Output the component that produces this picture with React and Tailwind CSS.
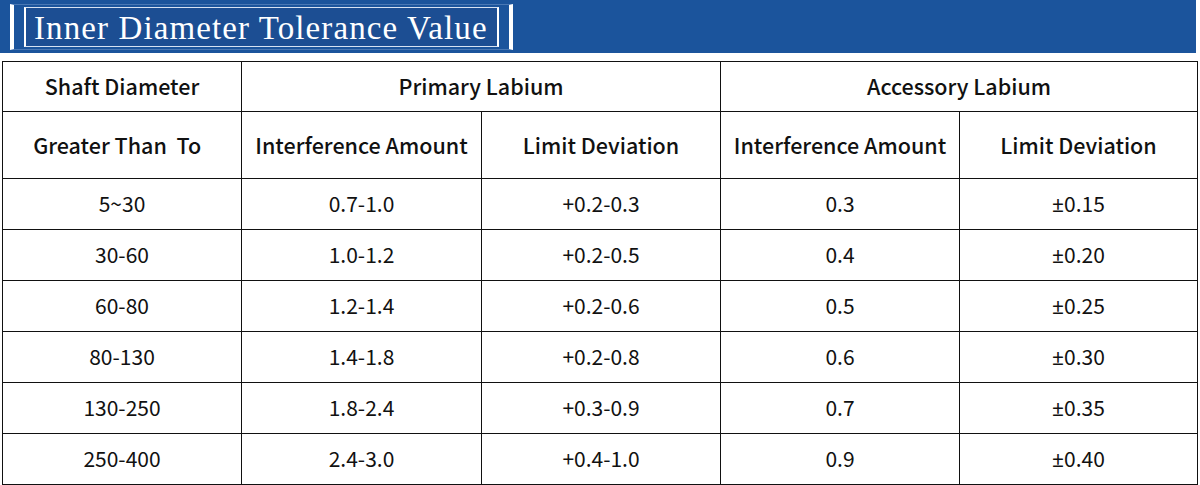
const rows = [
  ['5~30', '0.7-1.0', '+0.2-0.3', '0.3', '±0.15'],
  ['30-60', '1.0-1.2', '+0.2-0.5', '0.4', '±0.20'],
  ['60-80', '1.2-1.4', '+0.2-0.6', '0.5', '±0.25'],
  ['80-130', '1.4-1.8', '+0.2-0.8', '0.6', '±0.30'],
  ['130-250', '1.8-2.4', '+0.3-0.9', '0.7', '±0.35'],
  ['250-400', '2.4-3.0', '+0.4-1.0', '0.9', '±0.40'],
]

const cell = 'border-[1.5px] border-[#111] text-center align-middle'

// the CJK font draws ± full-width, so give it a latin face
function Value({ v }) {
  if (v.startsWith('±')) {
    return (
      <>
        <span style={{ fontFamily: '"Noto Sans", sans-serif' }}>±</span>
        {v.slice(1)}
      </>
    )
  }
  return v
}

export default function App() {
  return (
    <div className="w-[1200px] h-[485px] bg-white overflow-hidden" style={{ fontFamily: '"Noto Sans CJK SC", "Noto Sans", sans-serif' }}>
      {/* Title bar */}
      <div className="h-[53px] w-[1196px] bg-[#1b549c] flex items-center pl-[10px]">
        <div className="h-[46px] flex items-stretch border-y border-[#4a78b4] border-x-[4px] border-x-white px-[10px] py-[2px]">
          <div className="flex items-center border border-[#d6e2f2] border-x-2 border-x-white bg-[#1c4e93] pl-[8px] pr-[9px]">
            <span className="text-white text-[33px] tracking-[1.1px] leading-none pt-[3px]" style={{ fontFamily: '"Liberation Serif", "Times New Roman", serif' }}>
              Inner Diameter Tolerance Value
            </span>
          </div>
        </div>
      </div>

      {/* Table */}
      <div className="pt-[8px] pl-[2px]">
        <table className="table-fixed border-collapse w-[1195px] text-[#111]">
          <colgroup>
            <col className="w-[239px]" />
            <col className="w-[240px]" />
            <col className="w-[239px]" />
            <col className="w-[239px]" />
            <col className="w-[238px]" />
          </colgroup>
          <thead>
            <tr className="h-[50px] text-[21.5px]">
              <th className={`${cell} font-medium`}>Shaft Diameter</th>
              <th colSpan={2} className={`${cell} font-medium`}>Primary Labium</th>
              <th colSpan={2} className={`${cell} font-medium`}>Accessory Labium</th>
            </tr>
            <tr className="h-[67px] text-[21.5px]">
              <th className={`${cell} font-medium whitespace-pre`}>Greater Than  To  </th>
              <th className={`${cell} font-medium`}>Interference Amount</th>
              <th className={`${cell} font-medium`}>Limit Deviation</th>
              <th className={`${cell} font-medium`}>Interference Amount</th>
              <th className={`${cell} font-medium`}>Limit Deviation</th>
            </tr>
          </thead>
          <tbody>
            {rows.map((r, i) => (
              <tr key={i} className="h-[51px] text-[21px]">
                {r.map((v, j) => (
                  <td key={j} className={`${cell} font-normal`}>
                    <Value v={v} />
                  </td>
                ))}
              </tr>
            ))}
          </tbody>
        </table>
      </div>
    </div>
  )
}
